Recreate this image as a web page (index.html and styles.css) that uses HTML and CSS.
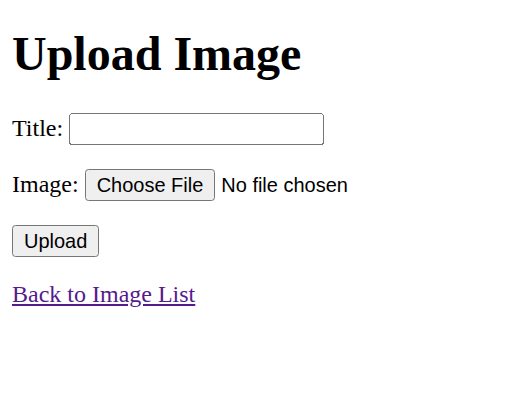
FILE: index.html
```html
<!DOCTYPE html>
<html>
<head>
<meta charset="utf-8">
<title>Upload Image</title>
<link rel="stylesheet" href="styles.css">
</head>
<body>
<h1 class="title">Upload Image</h1>
<form class="upload-form">
  <p class="row"><label for="title">Title:</label> <input class="text-input" type="text" id="title" name="title"></p>
  <p class="row"><label for="image">Image:</label> <input class="file-input" type="file" id="image" name="image"></p>
  <p class="row"><button class="btn" type="submit">Upload</button></p>
</form>
<p class="row"><a class="back-link" href="#">Back to Image List</a></p>
</body>
</html>
```
FILE: styles.css
```css
html {
  zoom: 1.5;
}
body {
  margin: 8px;
  font-family: "Liberation Serif", "Times New Roman", serif;
  font-size: 16px;
  color: #000;
  background: #fff;
}
.title {
  font-size: 2em;
  margin: 9.5px 0 0.67em;
}
.row {
  margin: 1em 0;
}
.text-input,
.file-input,
.btn {
  font-family: "Liberation Sans", Arial, sans-serif;
  font-size: 13.333px;
}
.text-input {
  box-sizing: border-box;
  width: 170px;
}
.back-link {
  color: #551a8b;
}
```
